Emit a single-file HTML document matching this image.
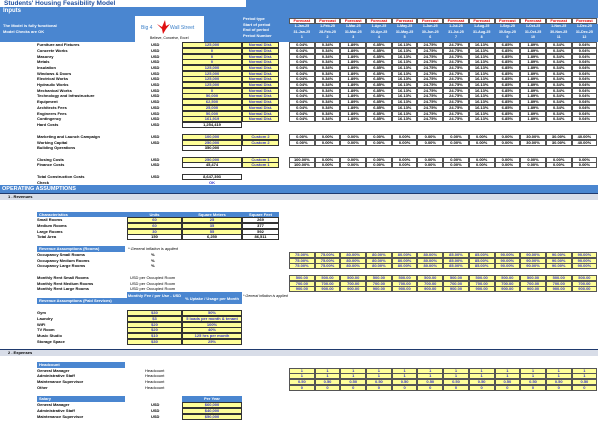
<!DOCTYPE html><html><head><style>
body{margin:0;width:600px;height:421px;background:#fff;position:relative;overflow:hidden;font-family:"Liberation Sans",sans-serif}
.r{position:absolute;left:0;width:600px;height:6px;font-weight:bold;font-size:4px;line-height:6px;color:#000}
.l{position:absolute;left:37px}
.u{position:absolute;left:151px}
.b{position:absolute;left:182px;width:60px;height:6px;box-sizing:border-box;border:1px solid #333;text-align:center;line-height:4.5px;background:#ffff99;color:#33c}
.w{background:#fff;color:#000}
.n{left:242px;width:37px}
.m{position:absolute;left:289px;top:0;display:flex}
.m span{width:25.7px;height:6px;box-sizing:border-box;border:1px solid #555;text-align:center;line-height:4.5px;background:#fff}
.m.y span{background:#ffff99;color:#33c}
.hd{position:absolute;background:#4a86d0;color:#fff;font-weight:bold;font-size:4px;line-height:6px;padding-left:2px;box-sizing:border-box}
.blue{position:absolute;background:#4a86d0}
</style></head><body>
<div class="blue" style="left:0;top:0;width:598px;height:42px"></div>
<div style="position:absolute;left:0;top:0;width:242px;height:7px;background:#fff;color:#2050a0;font-weight:bold;font-size:6.5px;line-height:7px;padding-left:4px">Students' Housing Feasibility Model</div>
<div style="position:absolute;left:3px;top:8px;color:#fff;font-weight:bold;font-size:6px">Inputs</div>
<div style="position:absolute;left:3px;top:23px;color:#fff;font-weight:bold;font-size:4px;line-height:5.5px">The Model is fully functional<br>Model Checks are OK</div>
<div style="position:absolute;left:135px;top:16px;width:69px;height:26px;background:#fff"></div>
<div style="position:absolute;left:141px;top:25px;color:#3a7fc8;font-size:5px">Big 4</div>
<div style="position:absolute;left:170px;top:25px;color:#3a7fc8;font-size:5px">Wall Street</div>
<svg style="position:absolute;left:155px;top:18px" width="16" height="17" viewBox="0 0 16 17"><path d="M2 6 L7 9 L10 2 L11 8 L15 6 L11 11 L8 16 L7 11 Z" fill="#e01010"/></svg>
<div style="position:absolute;left:150px;top:36px;font-size:3.5px">Believe, Conceive, Excel</div>
<div style="position:absolute;left:243px;top:16px;color:#fff;font-weight:bold;font-size:4px;line-height:5.6px">Period type<br>Start of period<br>End of period<br>Period Number</div>
<div class="r" style="top:18px"><div class="blue" style="left:289px;width:309px;height:6px;background:#d8dde8"></div><div class="m" style="color:#e00000">
<span>Forecast</span><span>Forecast</span><span>Forecast</span><span>Forecast</span><span>Forecast</span><span>Forecast</span><span>Forecast</span><span>Forecast</span><span>Forecast</span><span>Forecast</span><span>Forecast</span><span>Forecast</span></div></div>
<div style="position:absolute;left:289px;top:24px;display:flex;color:#fff;font-weight:bold;font-size:3.6px;line-height:5.5px;text-align:center">
<div style="width:25.7px">1-Jan-25<br>31-Jan-25<br>1</div><div style="width:25.7px">1-Feb-25<br>28-Feb-25<br>2</div><div style="width:25.7px">1-Mar-25<br>31-Mar-25<br>3</div><div style="width:25.7px">1-Apr-25<br>30-Apr-25<br>4</div><div style="width:25.7px">1-May-25<br>31-May-25<br>5</div><div style="width:25.7px">1-Jun-25<br>30-Jun-25<br>6</div><div style="width:25.7px">1-Jul-25<br>31-Jul-25<br>7</div><div style="width:25.7px">1-Aug-25<br>31-Aug-25<br>8</div><div style="width:25.7px">1-Sep-25<br>30-Sep-25<br>9</div><div style="width:25.7px">1-Oct-25<br>31-Oct-25<br>10</div><div style="width:25.7px">1-Nov-25<br>30-Nov-25<br>11</div><div style="width:25.7px">1-Dec-25<br>31-Dec-25<br>12</div></div>

<div class="r" style="top:42px"><span class="l">Furniture and Fixtures</span><span class="u">USD</span><span class="b">125,000</span><span class="b n">Normal Dist.</span><div class="m"><span>0.04%</span><span>0.34%</span><span>1.89%</span><span>6.85%</span><span>16.13%</span><span>24.75%</span><span>24.75%</span><span>16.13%</span><span>6.85%</span><span>1.89%</span><span>0.34%</span><span>0.04%</span></div></div>
<div class="r" style="top:48px"><span class="l">Concrete Works</span><span class="u">USD</span><span class="b">0</span><span class="b n">Normal Dist.</span><div class="m"><span>0.04%</span><span>0.34%</span><span>1.89%</span><span>6.85%</span><span>16.13%</span><span>24.75%</span><span>24.75%</span><span>16.13%</span><span>6.85%</span><span>1.89%</span><span>0.34%</span><span>0.04%</span></div></div>
<div class="r" style="top:53.5px"><span class="l">Masonry</span><span class="u">USD</span><span class="b">0</span><span class="b n">Normal Dist.</span><div class="m"><span>0.04%</span><span>0.34%</span><span>1.89%</span><span>6.85%</span><span>16.13%</span><span>24.75%</span><span>24.75%</span><span>16.13%</span><span>6.85%</span><span>1.89%</span><span>0.34%</span><span>0.04%</span></div></div>
<div class="r" style="top:59px"><span class="l">Metals</span><span class="u">USD</span><span class="b">0</span><span class="b n">Normal Dist.</span><div class="m"><span>0.04%</span><span>0.34%</span><span>1.89%</span><span>6.85%</span><span>16.13%</span><span>24.75%</span><span>24.75%</span><span>16.13%</span><span>6.85%</span><span>1.89%</span><span>0.34%</span><span>0.04%</span></div></div>
<div class="r" style="top:65px"><span class="l">Insulation</span><span class="u">USD</span><span class="b">125,000</span><span class="b n">Normal Dist.</span><div class="m"><span>0.04%</span><span>0.34%</span><span>1.89%</span><span>6.85%</span><span>16.13%</span><span>24.75%</span><span>24.75%</span><span>16.13%</span><span>6.85%</span><span>1.89%</span><span>0.34%</span><span>0.04%</span></div></div>
<div class="r" style="top:70.5px"><span class="l">Windows &amp; Doors</span><span class="u">USD</span><span class="b">125,000</span><span class="b n">Normal Dist.</span><div class="m"><span>0.04%</span><span>0.34%</span><span>1.89%</span><span>6.85%</span><span>16.13%</span><span>24.75%</span><span>24.75%</span><span>16.13%</span><span>6.85%</span><span>1.89%</span><span>0.34%</span><span>0.04%</span></div></div>
<div class="r" style="top:76px"><span class="l">Electrical Works</span><span class="u">USD</span><span class="b">125,000</span><span class="b n">Normal Dist.</span><div class="m"><span>0.04%</span><span>0.34%</span><span>1.89%</span><span>6.85%</span><span>16.13%</span><span>24.75%</span><span>24.75%</span><span>16.13%</span><span>6.85%</span><span>1.89%</span><span>0.34%</span><span>0.04%</span></div></div>
<div class="r" style="top:82px"><span class="l">Hydraulic Works</span><span class="u">USD</span><span class="b">125,000</span><span class="b n">Normal Dist.</span><div class="m"><span>0.04%</span><span>0.34%</span><span>1.89%</span><span>6.85%</span><span>16.13%</span><span>24.75%</span><span>24.75%</span><span>16.13%</span><span>6.85%</span><span>1.89%</span><span>0.34%</span><span>0.04%</span></div></div>
<div class="r" style="top:87.5px"><span class="l">Mechanical Works</span><span class="u">USD</span><span class="b">0</span><span class="b n">Normal Dist.</span><div class="m"><span>0.04%</span><span>0.34%</span><span>1.89%</span><span>6.85%</span><span>16.13%</span><span>24.75%</span><span>24.75%</span><span>16.13%</span><span>6.85%</span><span>1.89%</span><span>0.34%</span><span>0.04%</span></div></div>
<div class="r" style="top:93px"><span class="l">Technology and Infrastructure</span><span class="u">USD</span><span class="b">50,000</span><span class="b n">Normal Dist.</span><div class="m"><span>0.04%</span><span>0.34%</span><span>1.89%</span><span>6.85%</span><span>16.13%</span><span>24.75%</span><span>24.75%</span><span>16.13%</span><span>6.85%</span><span>1.89%</span><span>0.34%</span><span>0.04%</span></div></div>
<div class="r" style="top:99px"><span class="l">Equipment</span><span class="u">USD</span><span class="b">62,500</span><span class="b n">Normal Dist.</span><div class="m"><span>0.04%</span><span>0.34%</span><span>1.89%</span><span>6.85%</span><span>16.13%</span><span>24.75%</span><span>24.75%</span><span>16.13%</span><span>6.85%</span><span>1.89%</span><span>0.34%</span><span>0.04%</span></div></div>
<div class="r" style="top:105px"><span class="l">Architects Fees</span><span class="u">USD</span><span class="b">25,000</span><span class="b n">Normal Dist.</span><div class="m"><span>0.04%</span><span>0.34%</span><span>1.89%</span><span>6.85%</span><span>16.13%</span><span>24.75%</span><span>24.75%</span><span>16.13%</span><span>6.85%</span><span>1.89%</span><span>0.34%</span><span>0.04%</span></div></div>
<div class="r" style="top:110.5px"><span class="l">Engineers Fees</span><span class="u">USD</span><span class="b">50,000</span><span class="b n">Normal Dist.</span><div class="m"><span>0.04%</span><span>0.34%</span><span>1.89%</span><span>6.85%</span><span>16.13%</span><span>24.75%</span><span>24.75%</span><span>16.13%</span><span>6.85%</span><span>1.89%</span><span>0.34%</span><span>0.04%</span></div></div>
<div class="r" style="top:116px"><span class="l">Contingency</span><span class="u">USD</span><span class="b">161,919</span><span class="b n">Normal Dist.</span><div class="m"><span>0.04%</span><span>0.34%</span><span>1.89%</span><span>6.85%</span><span>16.13%</span><span>24.75%</span><span>24.75%</span><span>16.13%</span><span>6.85%</span><span>1.89%</span><span>0.34%</span><span>0.04%</span></div></div>
<div class="r" style="top:122px"><span class="l">Hard Costs</span><span class="u">USD</span><span class="b w">1,254,419</span></div>

<div class="r" style="top:134px"><span class="l">Marketing and Launch Campaign</span><span class="u">USD</span><span class="b">100,000</span><span class="b n">Custom 2</span><div class="m"><span>0.00%</span><span>0.00%</span><span>0.00%</span><span>0.00%</span><span>0.00%</span><span>0.00%</span><span>0.00%</span><span>0.00%</span><span>0.00%</span><span>30.00%</span><span>30.00%</span><span>40.00%</span></div></div>
<div class="r" style="top:139.5px"><span class="l">Working Capital</span><span class="u">USD</span><span class="b">250,000</span><span class="b n">Custom 2</span><div class="m"><span>0.00%</span><span>0.00%</span><span>0.00%</span><span>0.00%</span><span>0.00%</span><span>0.00%</span><span>0.00%</span><span>0.00%</span><span>0.00%</span><span>30.00%</span><span>30.00%</span><span>40.00%</span></div></div>
<div class="r" style="top:145px"><span class="l">Building Operations</span><span class="b w">350,000</span></div>
<div class="r" style="top:156.5px"><span class="l">Closing Costs</span><span class="u">USD</span><span class="b">250,000</span><span class="b n">Custom 1</span><div class="m"><span>100.00%</span><span>0.00%</span><span>0.00%</span><span>0.00%</span><span>0.00%</span><span>0.00%</span><span>0.00%</span><span>0.00%</span><span>0.00%</span><span>0.00%</span><span>0.00%</span><span>0.00%</span></div></div>
<div class="r" style="top:162px"><span class="l">Finance Costs</span><span class="u">USD</span><span class="b w">45,474</span><span class="b n">Custom 1</span><div class="m"><span>100.00%</span><span>0.00%</span><span>0.00%</span><span>0.00%</span><span>0.00%</span><span>0.00%</span><span>0.00%</span><span>0.00%</span><span>0.00%</span><span>0.00%</span><span>0.00%</span><span>0.00%</span></div></div>
<div class="r" style="top:174px"><span class="l">Total Construction Costs</span><span class="u">USD</span><span class="b w">8,647,393</span></div>
<div class="r" style="top:179.5px"><span class="l">Check</span><span style="position:absolute;left:182px;width:60px;text-align:center;color:#33c">OK</span></div>

<div class="hd" style="left:0;top:185px;width:598px;height:8px;font-size:5.5px;line-height:8px">OPERATING ASSUMPTIONS</div>
<div style="position:absolute;left:0;top:193px;width:598px;height:1px;background:#1f3a6e"></div>
<div style="position:absolute;left:0;top:194px;width:598px;height:6px;background:#d8dde8;font-weight:bold;font-size:4px;line-height:6px;padding-left:8px;box-sizing:border-box">1 . Revenues</div>

<div class="hd" style="left:37px;top:212px;width:242px;height:5px;line-height:5px">Characteristics</div>
<div class="r" style="top:211.5px;color:#fff"><span style="position:absolute;left:127px;width:55px;text-align:center">Units</span><span style="position:absolute;left:182px;width:60px;text-align:center">Square Meters</span><span style="position:absolute;left:242px;width:37px;text-align:center">Square Feet</span></div>
<div class="r" style="top:217px"><span class="l">Small Rooms</span><span class="b" style="left:127px;width:55px">60</span><span class="b">25</span><span class="b n w">269</span></div>
<div class="r" style="top:223px"><span class="l">Medium Rooms</span><span class="b" style="left:127px;width:55px">60</span><span class="b">35</span><span class="b n w">377</span></div>
<div class="r" style="top:228.5px"><span class="l">Large Rooms</span><span class="b" style="left:127px;width:55px">30</span><span class="b">55</span><span class="b n w">592</span></div>
<div class="r" style="top:234px"><span class="l">Total Area</span><span class="b w" style="left:127px;width:55px">150</span><span class="b w">6,250</span><span class="b n w">86,511</span></div>

<div class="hd" style="left:37px;top:246px;width:88px;height:6px">Revenue Assumptions (Rooms)</div>
<div class="r" style="top:246px;font-weight:normal;font-style:italic"><span style="position:absolute;left:128px">* General inflation is applied</span></div>
<div class="r" style="top:252px"><span class="l">Occupancy Small Rooms</span><span class="u">%</span><div class="m y"><span>75.00%</span><span>75.00%</span><span>80.00%</span><span>80.00%</span><span>80.00%</span><span>80.00%</span><span>85.00%</span><span>85.00%</span><span>90.00%</span><span>90.00%</span><span>90.00%</span><span>90.00%</span></div></div>
<div class="r" style="top:257.5px"><span class="l">Occupancy Medium Rooms</span><span class="u">%</span><div class="m y"><span>75.00%</span><span>75.00%</span><span>80.00%</span><span>80.00%</span><span>80.00%</span><span>80.00%</span><span>85.00%</span><span>85.00%</span><span>90.00%</span><span>90.00%</span><span>90.00%</span><span>90.00%</span></div></div>
<div class="r" style="top:263px"><span class="l">Occupancy Large Rooms</span><span class="u">%</span><div class="m y"><span>75.00%</span><span>75.00%</span><span>80.00%</span><span>80.00%</span><span>80.00%</span><span>80.00%</span><span>85.00%</span><span>85.00%</span><span>90.00%</span><span>90.00%</span><span>90.00%</span><span>90.00%</span></div></div>
<div class="r" style="top:275px"><span class="l">Monthly Rent Small Rooms</span><span style="position:absolute;left:130px;font-weight:normal">USD per Occupied Room</span><div class="m y"><span>500.00</span><span>500.00</span><span>500.00</span><span>500.00</span><span>500.00</span><span>500.00</span><span>500.00</span><span>500.00</span><span>500.00</span><span>500.00</span><span>500.00</span><span>500.00</span></div></div>
<div class="r" style="top:280.5px"><span class="l">Monthly Rent Medium Rooms</span><span style="position:absolute;left:130px;font-weight:normal">USD per Occupied Room</span><div class="m y"><span>700.00</span><span>700.00</span><span>700.00</span><span>700.00</span><span>700.00</span><span>700.00</span><span>700.00</span><span>700.00</span><span>700.00</span><span>700.00</span><span>700.00</span><span>700.00</span></div></div>
<div class="r" style="top:286px"><span class="l">Monthly Rent Large Rooms</span><span style="position:absolute;left:130px;font-weight:normal">USD per Occupied Room</span><div class="m y"><span>900.00</span><span>900.00</span><span>900.00</span><span>900.00</span><span>900.00</span><span>900.00</span><span>900.00</span><span>900.00</span><span>900.00</span><span>900.00</span><span>900.00</span><span>900.00</span></div></div>

<div class="hd" style="left:37px;top:298px;width:90px;height:6px">Revenue Assumptions (Paid Services)</div>
<div class="hd" style="left:127px;top:292px;width:115px;height:12px;padding:0"></div>
<div style="position:absolute;left:127px;top:293px;width:55px;text-align:center;color:#fff;font-weight:bold;font-size:4px;line-height:5px">Monthly Fee / per Use - USD</div>
<div style="position:absolute;left:182px;top:295.5px;width:60px;text-align:center;color:#fff;font-weight:bold;font-size:4px;line-height:5px">% Uptake / Usage per Month</div>
<div style="position:absolute;left:243px;top:294px;font-size:3.6px;font-style:italic">* General inflation is applied</div>
<div class="r" style="top:310px"><span class="l">Gym</span><span class="b" style="left:127px;width:55px">$30</span><span class="b">50%</span></div>
<div class="r" style="top:316px"><span class="l">Laundry</span><span class="b" style="left:127px;width:55px">$3</span><span class="b">5 loads per month &amp; tenant</span></div>
<div class="r" style="top:321.5px"><span class="l">WiFi</span><span class="b" style="left:127px;width:55px">$20</span><span class="b">100%</span></div>
<div class="r" style="top:327px"><span class="l">TV Room</span><span class="b" style="left:127px;width:55px">$20</span><span class="b">40%</span></div>
<div class="r" style="top:333px"><span class="l">Music Studio</span><span class="b" style="left:127px;width:55px">$10</span><span class="b">125 hrs per month</span></div>
<div class="r" style="top:338.5px"><span class="l">Storage Space</span><span class="b" style="left:127px;width:55px">$30</span><span class="b">25%</span></div>

<div style="position:absolute;left:0;top:349px;width:598px;height:1px;background:#1f3a6e"></div>
<div style="position:absolute;left:0;top:350px;width:598px;height:6px;background:#d8dde8;font-weight:bold;font-size:4px;line-height:6px;padding-left:8px;box-sizing:border-box">2 . Expenses</div>

<div class="hd" style="left:37px;top:362px;width:88px;height:6px">Headcount</div>
<div class="r" style="top:367.5px"><span class="l">General Manager</span><span style="position:absolute;left:145px;font-weight:normal">Headcount</span><div class="m y"><span>1</span><span>1</span><span>1</span><span>1</span><span>1</span><span>1</span><span>1</span><span>1</span><span>1</span><span>1</span><span>1</span><span>1</span></div></div>
<div class="r" style="top:373px"><span class="l">Administrative Staff</span><span style="position:absolute;left:145px;font-weight:normal">Headcount</span><div class="m y"><span>1</span><span>1</span><span>1</span><span>1</span><span>1</span><span>1</span><span>1</span><span>1</span><span>1</span><span>1</span><span>1</span><span>1</span></div></div>
<div class="r" style="top:379px"><span class="l">Maintenance Supervisor</span><span style="position:absolute;left:145px;font-weight:normal">Headcount</span><div class="m y"><span>0.50</span><span>0.50</span><span>0.50</span><span>0.50</span><span>0.50</span><span>0.50</span><span>0.50</span><span>0.50</span><span>0.50</span><span>0.50</span><span>0.50</span><span>0.50</span></div></div>
<div class="r" style="top:385px"><span class="l">Other</span><span style="position:absolute;left:145px;font-weight:normal">Headcount</span><div class="m y"><span>0</span><span>0</span><span>0</span><span>0</span><span>0</span><span>0</span><span>0</span><span>0</span><span>0</span><span>0</span><span>0</span><span>0</span></div></div>

<div class="hd" style="left:37px;top:396px;width:88px;height:6px">Salary</div>
<div class="hd" style="left:182px;top:396px;width:60px;height:6px;text-align:center;padding:0">Per Year</div>
<div class="r" style="top:402px"><span class="l">General Manager</span><span class="u">USD</span><span class="b">$60,000</span></div>
<div class="r" style="top:408px"><span class="l">Administrative Staff</span><span class="u">USD</span><span class="b">$40,000</span></div>
<div class="r" style="top:413.5px"><span class="l">Maintenance Supervisor</span><span class="u">USD</span><span class="b">$50,000</span></div>
</body></html>
